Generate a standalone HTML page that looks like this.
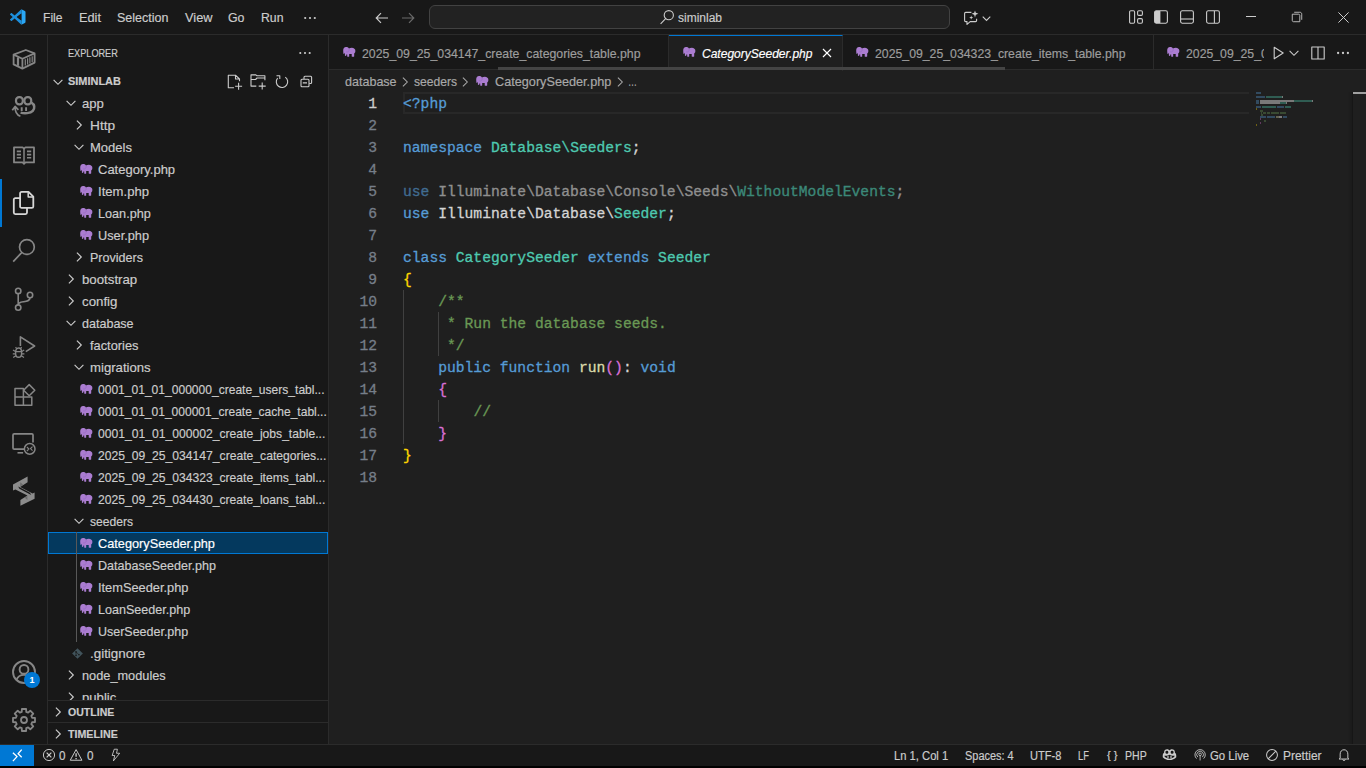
<!DOCTYPE html>
<html>
<head>
<meta charset="utf-8">
<title>CategorySeeder.php - siminlab - Visual Studio Code</title>
<style>
*{box-sizing:border-box;margin:0;padding:0}
html,body{width:1366px;height:768px;overflow:hidden;background:#000}
body{font-family:"Liberation Sans",sans-serif;font-size:13px;color:#ccc;position:relative}
.abs{position:absolute}
.t{white-space:nowrap;-webkit-text-stroke:0.18px currentColor}
svg{display:block;overflow:visible}
#title{left:0;top:0;width:1366px;height:35px;background:#181818;border-bottom:1px solid #2b2b2b}
#cmd{left:429px;top:5px;width:521px;height:24px;border:1px solid #424242;border-radius:6px;background:#222222}
#act{left:0;top:35px;width:48px;height:710px;background:#181818;border-right:1px solid #2b2b2b}
#side{left:48px;top:35px;width:281px;height:710px;background:#181818;border-right:1px solid #2b2b2b;overflow:hidden}
#ed{left:329px;top:35px;width:1037px;height:710px;background:#1f1f1f;overflow:hidden}
#tabs{left:0;top:0;width:1037px;height:35px;background:#181818;border-bottom:1px solid #2b2b2b}
.tab{top:0;height:35px;border-right:1px solid #2b2b2b}
.code{font-family:"Liberation Mono",monospace;font-size:14.67px;line-height:22px;white-space:pre}
.cl span,.cl,.ln{-webkit-text-stroke:0.3px currentColor}
.ln{left:0;width:48px;text-align:right;color:#767e89;height:22px}
.cl{left:74px;height:22px;color:#d4d4d4}
.k{color:#569cd6}.ty{color:#4ec9b0}.c{color:#6a9955}.f{color:#dcdcaa}.b1{color:#ffd700}.b2{color:#da70d6}
#status{left:0;top:744px;width:1366px;height:22px;background:#181818;border-top:1px solid #2b2b2b}
</style>
</head>
<body>
<div id="title" class="abs"><svg class="abs" style="left:10px;top:9px;" width="16" height="16" viewBox="0 0 100 100"><path d="M71 2 L93 12.5 C96 14 97 16 97 19 V81 C97 84 96 86 93 87.5 L71 98 Z" fill="#2aa7f5"/><path d="M71 2 L29 40 L12 26 C10 24.5 8 24.5 6 26 L1 30.5 C-0.5 32 -0.5 34 1 35.5 L17 50 L1 64.5 C-0.5 66 -0.5 68 1 69.5 L6 74 C8 75.5 10 75.5 12 74 L29 60 L71 98 V72 L42.5 50 L71 28 Z" fill="#1d8fdc"/><path d="M71 28 L42.5 50 L71 72 Z" fill="#181818"/></svg><div class="abs t" style="left:43px;top:1px;height:34px;line-height:34px;font-size:13px;color:#cccccc;transform:scaleX(0.9309);transform-origin:0 50%;">File</div><div class="abs t" style="left:78.5px;top:1px;height:34px;line-height:34px;font-size:13px;color:#cccccc;transform:scaleX(0.9821);transform-origin:0 50%;">Edit</div><div class="abs t" style="left:116.5px;top:1px;height:34px;line-height:34px;font-size:13px;color:#cccccc;transform:scaleX(0.9630);transform-origin:0 50%;">Selection</div><div class="abs t" style="left:184.5px;top:1px;height:34px;line-height:34px;font-size:13px;color:#cccccc;transform:scaleX(0.9841);transform-origin:0 50%;">View</div><div class="abs t" style="left:228px;top:1px;height:34px;line-height:34px;font-size:13px;color:#cccccc;transform:scaleX(0.9515);transform-origin:0 50%;">Go</div><div class="abs t" style="left:260.5px;top:1px;height:34px;line-height:34px;font-size:13px;color:#cccccc;transform:scaleX(0.9434);transform-origin:0 50%;">Run</div><svg class="abs" style="left:302px;top:10px;" width="16" height="16" viewBox="0 0 16 16"><circle cx="3.2" cy="8" r="1.1" fill="#cccccc"/><circle cx="8" cy="8" r="1.1" fill="#cccccc"/><circle cx="12.8" cy="8" r="1.1" fill="#cccccc"/></svg><svg class="abs" style="left:374px;top:9.5px;" width="16" height="16" viewBox="0 0 16 16"><path d="M14 8 H2.4 M7 3.2 L2.2 8 L7 12.8" fill="none" stroke="#cccccc" stroke-width="1.15" /></svg><svg class="abs" style="left:400px;top:9.5px;" width="16" height="16" viewBox="0 0 16 16"><path d="M2 8 H13.6 M9 3.2 L13.8 8 L9 12.8" fill="none" stroke="#6b6b6b" stroke-width="1.15" /></svg><div id="cmd" class="abs"></div><svg class="abs" style="left:658.5px;top:9px;" width="16" height="16" viewBox="0 0 16 16"><path d="M14.4 6.2 A4.6 4.6 0 1 1 5.2 6.2 A4.6 4.6 0 1 1 14.4 6.2 Z M6.6 9.6 L1.6 14.8" fill="none" stroke="#cccccc" stroke-width="1.1" /></svg><div class="abs t" style="left:678px;top:1px;height:34px;line-height:34px;font-size:12.5px;color:#cccccc;transform:scaleX(0.9596);transform-origin:0 50%;">siminlab</div><svg class="abs" style="left:963px;top:9.5px;" width="16" height="16" viewBox="0 0 16 16"><path d="M8.4 2.4 H2.6 C2 2.4 1.6 2.8 1.6 3.4 V10.6 C1.6 11.2 2 11.6 2.6 11.6 H4 V14.4 L7.2 11.6 H12.6 C13.2 11.6 13.6 11.2 13.6 10.6 V8.8" fill="none" stroke="#cccccc" stroke-width="1.1" stroke-linejoin="round"/><path d="M12 0.4 L12.8 2.8 L15.4 3.8 L12.8 4.8 L12 7.4 L11.2 4.8 L8.6 3.8 L11.2 2.8 Z" fill="#cccccc"/><path d="M8.2 5.6 L8.7 7 L10.2 7.6 L8.7 8.2 L8.2 9.6 L7.7 8.2 L6.2 7.6 L7.7 7 Z" fill="#cccccc"/></svg><svg class="abs" style="left:981px;top:12.5px;" width="11" height="11" viewBox="0 0 16 16"><path d="M2.5 5.2 L8 10.7 L13.5 5.2" fill="none" stroke="#cccccc" stroke-width="1.6" /></svg><svg class="abs" style="left:1127.5px;top:9px;" width="16" height="16" viewBox="0 0 16 16"><rect x="1.6" y="1.8" width="5" height="12.4" rx="1.2" fill="none" stroke="#cccccc" stroke-width="1.1"/><rect x="9.6" y="1.8" width="4.8" height="4.6" rx="1.2" fill="none" stroke="#cccccc" stroke-width="1.1"/><rect x="9.6" y="9.6" width="4.8" height="4.6" rx="1.2" fill="none" stroke="#cccccc" stroke-width="1.1"/></svg><svg class="abs" style="left:1153px;top:9px;" width="16" height="16" viewBox="0 0 16 16"><path d="M2.6 2 H7.4 V14 H2.6 C2 14 1.8 13.6 1.8 13 V3 C1.8 2.4 2 2 2.6 2 Z" fill="#cccccc"/><rect x="1.6" y="1.8" width="12.8" height="12.4" rx="1.6" fill="none" stroke="#cccccc" stroke-width="1.1"/></svg><svg class="abs" style="left:1179px;top:9px;" width="16" height="16" viewBox="0 0 16 16"><rect x="1.6" y="1.8" width="12.8" height="12.4" rx="1.6" fill="none" stroke="#cccccc" stroke-width="1.1"/><path d="M1.8 10 H14.2" fill="none" stroke="#cccccc" stroke-width="1.1" /></svg><svg class="abs" style="left:1205px;top:9px;" width="16" height="16" viewBox="0 0 16 16"><rect x="1.6" y="1.8" width="12.8" height="12.4" rx="1.6" fill="none" stroke="#cccccc" stroke-width="1.1"/><path d="M9.4 2 V14" fill="none" stroke="#cccccc" stroke-width="1.1" /></svg><div class="abs" style="left:1246px;top:16px;width:10px;height:1px;background:#ccc"></div><svg class="abs" style="left:1290px;top:10px;" width="14" height="14" viewBox="0 0 16 16"><path d="M2.6 4.8 H9.8 C10.6 4.8 11.2 5.4 11.2 6.2 V13.4 H4 C3.2 13.4 2.6 12.8 2.6 12 Z" fill="none" stroke="#cccccc" stroke-width="1" /><path d="M4.8 2.6 H11.2 C12.6 2.6 13.4 3.4 13.4 4.8 V11.2" fill="none" stroke="#cccccc" stroke-width="1" /></svg><svg class="abs" style="left:1337.5px;top:11.5px;" width="11" height="11" viewBox="0 0 11 11"><path d="M0.4 0.4 L10.6 10.6 M10.6 0.4 L0.4 10.6" fill="none" stroke="#cccccc" stroke-width="1" /></svg></div>
<div id="act" class="abs"><div class="abs" style="left:0;top:144px;width:2px;height:48px;background:#0078d4"></div><svg class="abs" style="left:12px;top:12px;" width="24" height="24" viewBox="0 0 24 24"><path d="M1.6 7.6 L13.8 3 L22.6 6.4 L22.6 15.6 L10.4 21.6 L1.6 17.4 Z" fill="none" stroke="#868686" stroke-width="1.8" stroke-linejoin="round"/><path d="M1.6 7.6 L10.4 11.8 L22.6 6.4 M10.4 11.8 L10.4 21.6" fill="none" stroke="#868686" stroke-width="1.8" stroke-linejoin="round"/><path d="M6 10.4 L6 18.8" fill="none" stroke="#868686" stroke-width="2.2" /><path d="M13.3 12.2 L13.3 18.6 M15.6 11.2 L15.6 17.5 M17.9 10.2 L17.9 16.4 M20.2 9.2 L20.2 15.2" fill="none" stroke="#868686" stroke-width="1.2" /></svg><svg class="abs" style="left:12px;top:60px;" width="24" height="24" viewBox="0 0 24 24"><rect x="4" y="2.2" width="6.8" height="7.2" rx="3.1" fill="none" stroke="#868686" stroke-width="2.2"/><rect x="12.4" y="2.2" width="6.8" height="7.2" rx="3.1" fill="none" stroke="#868686" stroke-width="2.2"/><path d="M19.4 7.6 C22.8 9.4 23 13.4 20.8 15.8 C18.4 18.4 12.4 18.8 8.6 17.6" fill="none" stroke="#868686" stroke-width="2.5" /><path d="M9.7 12.3 V15.9 M14.1 12.3 V15.9" fill="none" stroke="#868686" stroke-width="1.9" /><path d="M0.3 15.3 L3.1 11.4 L6.4 14.8 M3.1 11.8 C3 15.4 3.6 19.6 8.4 21.3" fill="none" stroke="#868686" stroke-width="1.7" stroke-linejoin="round"/></svg><svg class="abs" style="left:12px;top:108px;" width="24" height="24" viewBox="0 0 24 24"><path d="M2 4.4 L10.6 4.4 L12 5.6 L13.4 4.4 L22 4.4 L22 19.4 L13.4 19.4 L12 20.8 L10.6 19.4 L2 19.4 Z" fill="none" stroke="#868686" stroke-width="1.8" stroke-linejoin="round"/><path d="M12 5.6 L12 20.4" fill="none" stroke="#868686" stroke-width="1.5" /><path d="M4.8 8.4 H9 M4.8 11.6 H9 M4.8 14.8 H9 M15 8.4 H19.2 M15 11.6 H19.2 M15 14.8 H19.2" fill="none" stroke="#868686" stroke-width="1.6" /></svg><svg class="abs" style="left:12px;top:156px;" width="24" height="24" viewBox="0 0 24 24"><path d="M8.1 2.4 C8.1 1.5 8.7 0.9 9.6 0.9 H16.5 L21.3 5.7 V15.4 C21.3 16.3 20.7 16.9 19.8 16.9 H9.6 C8.7 16.9 8.1 16.3 8.1 15.4 Z" fill="none" stroke="#d7d7d7" stroke-width="1.8" stroke-linejoin="round"/><path d="M16.2 1.2 V6 H21" fill="none" stroke="#d7d7d7" stroke-width="1.5" stroke-linejoin="round"/><path d="M8.1 7.1 H3.3 C2.4 7.1 1.8 7.7 1.8 8.6 V21.6 C1.8 22.5 2.4 23.1 3.3 23.1 H13.5 C14.4 23.1 15 22.5 15 21.6 V16.9" fill="none" stroke="#d7d7d7" stroke-width="1.8" /></svg><svg class="abs" style="left:12px;top:204px;" width="24" height="24" viewBox="0 0 24 24"><path d="M22.3 8 A7.4 7.4 0 1 1 7.5 8 A7.4 7.4 0 1 1 22.3 8 Z M9.9 13.4 L1.2 22.6" fill="none" stroke="#868686" stroke-width="1.7" /></svg><svg class="abs" style="left:12px;top:252px;" width="24" height="24" viewBox="0 0 24 24"><circle cx="6.2" cy="3.9" r="2.7" fill="none" stroke="#868686" stroke-width="1.6"/><circle cx="6.2" cy="20.6" r="2.7" fill="none" stroke="#868686" stroke-width="1.6"/><circle cx="18" cy="8" r="2.7" fill="none" stroke="#868686" stroke-width="1.6"/><path d="M6.2 6.6 L6.2 17.9 M18 10.7 C18 13.9 14.8 14.3 11.4 14.8 C8.4 15.2 6.2 16 6.2 17.9" fill="none" stroke="#868686" stroke-width="1.6" /></svg><svg class="abs" style="left:12px;top:300px;" width="24" height="24" viewBox="0 0 24 24"><path d="M8.4 11 L8.4 1.8 L22.6 11 L13.8 16.6" fill="none" stroke="#868686" stroke-width="1.6" stroke-linejoin="round"/><path d="M3.6 17.2 C3.6 14.8 4.8 13 6.6 13 C8.4 13 9.6 14.8 9.6 17.2 L9.6 18.4 C9.6 20.8 8.4 22.2 6.6 22.2 C4.8 22.2 3.6 20.8 3.6 18.4 Z" fill="none" stroke="#868686" stroke-width="1.4" /><path d="M3.6 16.6 H9.6 M1 15 L3.4 16.4 M12.2 15 L9.8 16.4 M0.8 18.8 H3.6 M9.6 18.8 H12.4 M1.2 22.6 L3.8 20.8 M12 22.6 L9.4 20.8 M4.6 13.6 L3.6 12.2 M8.6 13.6 L9.6 12.2" fill="none" stroke="#868686" stroke-width="1.2" /></svg><svg class="abs" style="left:12px;top:348px;" width="24" height="24" viewBox="0 0 24 24"><path d="M3 5.6 H11.4 V14 H3 Z M3 14 H11.4 V22.2 H3 Z M11.4 14 H19.8 V22.2 H11.4 Z" fill="none" stroke="#868686" stroke-width="1.5" stroke-linejoin="round"/><path d="M17.2 1.6 L22.8 7.2 L17.2 12.8 L11.6 7.2 Z" fill="none" stroke="#868686" stroke-width="1.5" stroke-linejoin="round"/></svg><svg class="abs" style="left:12px;top:396px;" width="24" height="24" viewBox="0 0 24 24"><path d="M12.6 18.2 H2.2 C1.4 18.2 1 17.8 1 17 V4.1 C1 3.3 1.4 2.9 2.2 2.9 H19.8 C20.6 2.9 21 3.3 21 4.1 V11.4" fill="none" stroke="#868686" stroke-width="1.7" /><path d="M5.5 21.8 H11.1" fill="none" stroke="#868686" stroke-width="1.6" /><circle cx="17.7" cy="17.9" r="5.3" fill="#181818" stroke="#868686" stroke-width="1.5"/><path d="M14.9 16 L16.9 18 L14.9 20 M20.5 15.6 L18.5 17.6 L20.5 19.6" fill="none" stroke="#868686" stroke-width="1.1" /></svg><svg class="abs" style="left:11.5px;top:441px;" width="23.6" height="30.4" viewBox="0 0 23.6 30.4"><path d="M15.6 0.4 L15.6 6.2 L8.2 11 L20.6 17.6 L22.6 16.4 L22.6 22.8 L8.4 29.8 L8.4 24 L15.4 19.6 L3.4 13.4 L1 14.6 L1 8.6 Z" fill="#8c8c8c"/><path d="M6.2 10.4 L18 16.8 L19.2 19 L7.4 12.8 Z" fill="#181818"/><path d="M8.2 6.2 L11 8.6 L8.2 11 Z M15.4 19.6 L12.8 21.8 L15.4 24 Z" fill="#6c6c6c"/></svg><svg class="abs" style="left:12px;top:625px;" width="24" height="24" viewBox="0 0 24 24"><circle cx="12" cy="12" r="11" fill="none" stroke="#868686" stroke-width="1.9"/><circle cx="12" cy="9.4" r="4.4" fill="none" stroke="#868686" stroke-width="1.9"/><path d="M4.4 20 C5.8 16.4 8.6 14.9 12 14.9 C15.4 14.9 18.2 16.4 19.6 20" fill="none" stroke="#868686" stroke-width="1.9" /></svg><div class="abs" style="left:24px;top:637px;width:16px;height:16px;border-radius:8px;background:#0078d4;color:#fff;font-size:9px;font-weight:bold;line-height:16px;text-align:center">1</div><svg class="abs" style="left:12px;top:673px;" width="24" height="24" viewBox="0 0 24 24"><path d="M9.76 3.90 L9.88 1.00 L14.12 1.00 L14.24 3.90 L16.14 4.69 L18.28 2.73 L21.27 5.72 L19.31 7.86 L20.10 9.76 L23.00 9.88 L23.00 14.12 L20.10 14.24 L19.31 16.14 L21.27 18.28 L18.28 21.27 L16.14 19.31 L14.24 20.10 L14.12 23.00 L9.88 23.00 L9.76 20.10 L7.86 19.31 L5.72 21.27 L2.73 18.28 L4.69 16.14 L3.90 14.24 L1.00 14.12 L1.00 9.88 L3.90 9.76 L4.69 7.86 L2.73 5.72 L5.72 2.73 L7.86 4.69 Z" fill="none" stroke="#868686" stroke-width="1.8" stroke-linejoin="round"/><circle cx="12" cy="12" r="3" fill="none" stroke="#868686" stroke-width="1.8"/></svg></div>
<div id="side" class="abs"><div class="abs t" style="left:20.2px;top:1px;height:35px;line-height:35px;font-size:11px;color:#cccccc;transform:scaleX(0.8312);transform-origin:0 50%;">EXPLORER</div><svg class="abs" style="left:249px;top:10px;" width="16" height="16" viewBox="0 0 16 16"><circle cx="3.3" cy="8" r="1.05" fill="#cccccc"/><circle cx="8" cy="8" r="1.05" fill="#cccccc"/><circle cx="12.7" cy="8" r="1.05" fill="#cccccc"/></svg><svg class="abs" style="left:1.7px;top:38.5px;" width="16" height="16" viewBox="0 0 16 16"><path d="M3.6 5.9 L8 10.3 L12.4 5.9" fill="none" stroke="#cccccc" stroke-width="1.15" /></svg><div class="abs t" style="left:20.2px;top:35px;height:22px;line-height:22px;font-size:11px;color:#cccccc;transform:scaleX(0.9950);transform-origin:0 50%;font-weight:bold;">SIMINLAB</div><svg class="abs" style="left:179px;top:38.5px;" width="16" height="16" viewBox="0 0 16 16"><path d="M7 13.8 H1.3 V1.2 H8.5 L12.5 5 V7.3 M8.5 1.2 V5 H12.5" fill="none" stroke="#cccccc" stroke-width="1.1" stroke-linejoin="round"/><path d="M11.6 8.8 V15.7 M8.1 12.2 H15.1" fill="none" stroke="#cccccc" stroke-width="1.1" /></svg><svg class="abs" style="left:202.3px;top:38.5px;" width="16" height="16" viewBox="0 0 16 16"><path d="M6.3 12.1 H1 V0.9 H5.8 L7 1.8 H14.9 V6.2 M1 5.5 H5.6 L7 4 H14.9" fill="none" stroke="#cccccc" stroke-width="1.1" stroke-linejoin="round"/><path d="M12.2 8.6 V15.6 M8.7 12.1 H15.7" fill="none" stroke="#cccccc" stroke-width="1.1" /></svg><svg class="abs" style="left:226px;top:38.5px;" width="16" height="16" viewBox="0 0 16 16"><path d="M11.27 3.13 A5.7 5.7 0 1 1 3.63 4.14" fill="none" stroke="#cccccc" stroke-width="1.1" /><path d="M2.5 1.8 H5.8 V5.1" fill="none" stroke="#cccccc" stroke-width="1.1" stroke-linejoin="round"/></svg><svg class="abs" style="left:249.7px;top:38.5px;" width="16" height="16" viewBox="0 0 16 16"><path d="M6 5 V3.3 C6 2.7 6.4 2.3 7 2.3 H12.6 C13.2 2.3 13.6 2.7 13.6 3.3 V8.5 C13.6 9.1 13.2 9.5 12.6 9.5 H11.2" fill="none" stroke="#cccccc" stroke-width="1.1" /><path d="M4 5.2 H10 C10.6 5.2 11 5.6 11 6.2 V11.8 C11 12.4 10.6 12.8 10 12.8 H4 C3.4 12.8 3 12.4 3 11.8 V6.2 C3 5.6 3.4 5.2 4 5.2 Z M4.8 8.9 H9" fill="none" stroke="#cccccc" stroke-width="1.1" /></svg><div class="abs" style="left:0;top:57px;width:280px;height:608px;overflow:hidden"><svg class="abs" style="left:15px;top:3px;" width="16" height="16" viewBox="0 0 16 16"><path d="M3.6 5.9 L8 10.3 L12.4 5.9" fill="none" stroke="#cccccc" stroke-width="1.15" /></svg><div class="abs t" style="left:34.3px;top:1px;height:22px;line-height:22px;font-size:13px;color:#cccccc;transform:scaleX(1.0096);transform-origin:0 50%;">app</div><svg class="abs" style="left:23px;top:25px;" width="16" height="16" viewBox="0 0 16 16"><path d="M5.9 3.6 L10.3 8 L5.9 12.4" fill="none" stroke="#cccccc" stroke-width="1.15" /></svg><div class="abs t" style="left:42.3px;top:23px;height:22px;line-height:22px;font-size:13px;color:#cccccc;transform:scaleX(1.0528);transform-origin:0 50%;">Http</div><svg class="abs" style="left:23px;top:47px;" width="16" height="16" viewBox="0 0 16 16"><path d="M3.6 5.9 L8 10.3 L12.4 5.9" fill="none" stroke="#cccccc" stroke-width="1.15" /></svg><div class="abs t" style="left:42.3px;top:45px;height:22px;line-height:22px;font-size:13px;color:#cccccc;transform:scaleX(1.0022);transform-origin:0 50%;">Models</div><svg class="abs" style="left:31.5px;top:72px;" width="13" height="10" viewBox="0 0 13 10"><path d="M3.0 0.1 C1.2 0.1 0.2 1.6 0.2 3.6 C0.2 5 0.3 6 0.5 6.7 C0.7 7.2 1.4 7.1 1.4 6.6 L1.5 5.7 L1.9 6.4 L1.9 8.6 C1.9 9.2 3.3 9.2 3.3 8.6 L3.3 7.4 C3.6 7.5 3.9 7.5 4.2 7.4 L4.2 9.2 C4.2 9.7 4.6 9.8 5.0 9.8 L5.5 9.8 C6.0 9.8 6.2 9.6 6.2 9.2 L6.2 7 L8.7 7 L8.7 9.2 C8.7 9.7 9.0 9.8 9.5 9.8 L10.4 9.8 C10.9 9.8 11.2 9.6 11.2 9.2 L11.2 6.6 C12 5.8 12.4 4.9 12.4 3.9 C12.4 2.1 10.9 0.8 8.8 0.8 C7.6 0.8 6.7 1 6 1.4 C5.3 0.6 4.2 0.1 3.0 0.1 Z" fill="#ab7dd1"/><path d="M5.9 1.5 C6.3 2.6 6.2 3.8 5.4 4.6 C4.6 5.2 3.6 5.1 3 4.6" fill="none" stroke="#9468c2" stroke-width="0.6"/></svg><div class="abs t" style="left:50.2px;top:67px;height:22px;line-height:22px;font-size:13px;color:#cccccc;transform:scaleX(1.0002);transform-origin:0 50%;">Category.php</div><svg class="abs" style="left:31.5px;top:94px;" width="13" height="10" viewBox="0 0 13 10"><path d="M3.0 0.1 C1.2 0.1 0.2 1.6 0.2 3.6 C0.2 5 0.3 6 0.5 6.7 C0.7 7.2 1.4 7.1 1.4 6.6 L1.5 5.7 L1.9 6.4 L1.9 8.6 C1.9 9.2 3.3 9.2 3.3 8.6 L3.3 7.4 C3.6 7.5 3.9 7.5 4.2 7.4 L4.2 9.2 C4.2 9.7 4.6 9.8 5.0 9.8 L5.5 9.8 C6.0 9.8 6.2 9.6 6.2 9.2 L6.2 7 L8.7 7 L8.7 9.2 C8.7 9.7 9.0 9.8 9.5 9.8 L10.4 9.8 C10.9 9.8 11.2 9.6 11.2 9.2 L11.2 6.6 C12 5.8 12.4 4.9 12.4 3.9 C12.4 2.1 10.9 0.8 8.8 0.8 C7.6 0.8 6.7 1 6 1.4 C5.3 0.6 4.2 0.1 3.0 0.1 Z" fill="#ab7dd1"/><path d="M5.9 1.5 C6.3 2.6 6.2 3.8 5.4 4.6 C4.6 5.2 3.6 5.1 3 4.6" fill="none" stroke="#9468c2" stroke-width="0.6"/></svg><div class="abs t" style="left:50.2px;top:89px;height:22px;line-height:22px;font-size:13px;color:#cccccc;transform:scaleX(1.0082);transform-origin:0 50%;">Item.php</div><svg class="abs" style="left:31.5px;top:116px;" width="13" height="10" viewBox="0 0 13 10"><path d="M3.0 0.1 C1.2 0.1 0.2 1.6 0.2 3.6 C0.2 5 0.3 6 0.5 6.7 C0.7 7.2 1.4 7.1 1.4 6.6 L1.5 5.7 L1.9 6.4 L1.9 8.6 C1.9 9.2 3.3 9.2 3.3 8.6 L3.3 7.4 C3.6 7.5 3.9 7.5 4.2 7.4 L4.2 9.2 C4.2 9.7 4.6 9.8 5.0 9.8 L5.5 9.8 C6.0 9.8 6.2 9.6 6.2 9.2 L6.2 7 L8.7 7 L8.7 9.2 C8.7 9.7 9.0 9.8 9.5 9.8 L10.4 9.8 C10.9 9.8 11.2 9.6 11.2 9.2 L11.2 6.6 C12 5.8 12.4 4.9 12.4 3.9 C12.4 2.1 10.9 0.8 8.8 0.8 C7.6 0.8 6.7 1 6 1.4 C5.3 0.6 4.2 0.1 3.0 0.1 Z" fill="#ab7dd1"/><path d="M5.9 1.5 C6.3 2.6 6.2 3.8 5.4 4.6 C4.6 5.2 3.6 5.1 3 4.6" fill="none" stroke="#9468c2" stroke-width="0.6"/></svg><div class="abs t" style="left:50.2px;top:111px;height:22px;line-height:22px;font-size:13px;color:#cccccc;transform:scaleX(0.9738);transform-origin:0 50%;">Loan.php</div><svg class="abs" style="left:31.5px;top:138px;" width="13" height="10" viewBox="0 0 13 10"><path d="M3.0 0.1 C1.2 0.1 0.2 1.6 0.2 3.6 C0.2 5 0.3 6 0.5 6.7 C0.7 7.2 1.4 7.1 1.4 6.6 L1.5 5.7 L1.9 6.4 L1.9 8.6 C1.9 9.2 3.3 9.2 3.3 8.6 L3.3 7.4 C3.6 7.5 3.9 7.5 4.2 7.4 L4.2 9.2 C4.2 9.7 4.6 9.8 5.0 9.8 L5.5 9.8 C6.0 9.8 6.2 9.6 6.2 9.2 L6.2 7 L8.7 7 L8.7 9.2 C8.7 9.7 9.0 9.8 9.5 9.8 L10.4 9.8 C10.9 9.8 11.2 9.6 11.2 9.2 L11.2 6.6 C12 5.8 12.4 4.9 12.4 3.9 C12.4 2.1 10.9 0.8 8.8 0.8 C7.6 0.8 6.7 1 6 1.4 C5.3 0.6 4.2 0.1 3.0 0.1 Z" fill="#ab7dd1"/><path d="M5.9 1.5 C6.3 2.6 6.2 3.8 5.4 4.6 C4.6 5.2 3.6 5.1 3 4.6" fill="none" stroke="#9468c2" stroke-width="0.6"/></svg><div class="abs t" style="left:50.2px;top:133px;height:22px;line-height:22px;font-size:13px;color:#cccccc;transform:scaleX(0.9801);transform-origin:0 50%;">User.php</div><svg class="abs" style="left:23px;top:157px;" width="16" height="16" viewBox="0 0 16 16"><path d="M5.9 3.6 L10.3 8 L5.9 12.4" fill="none" stroke="#cccccc" stroke-width="1.15" /></svg><div class="abs t" style="left:42.3px;top:155px;height:22px;line-height:22px;font-size:13px;color:#cccccc;transform:scaleX(0.9634);transform-origin:0 50%;">Providers</div><svg class="abs" style="left:15px;top:179px;" width="16" height="16" viewBox="0 0 16 16"><path d="M5.9 3.6 L10.3 8 L5.9 12.4" fill="none" stroke="#cccccc" stroke-width="1.15" /></svg><div class="abs t" style="left:34.3px;top:177px;height:22px;line-height:22px;font-size:13px;color:#cccccc;transform:scaleX(1.0184);transform-origin:0 50%;">bootstrap</div><svg class="abs" style="left:15px;top:201px;" width="16" height="16" viewBox="0 0 16 16"><path d="M5.9 3.6 L10.3 8 L5.9 12.4" fill="none" stroke="#cccccc" stroke-width="1.15" /></svg><div class="abs t" style="left:34.3px;top:199px;height:22px;line-height:22px;font-size:13px;color:#cccccc;transform:scaleX(1.0204);transform-origin:0 50%;">config</div><svg class="abs" style="left:15px;top:223px;" width="16" height="16" viewBox="0 0 16 16"><path d="M3.6 5.9 L8 10.3 L12.4 5.9" fill="none" stroke="#cccccc" stroke-width="1.15" /></svg><div class="abs t" style="left:34.3px;top:221px;height:22px;line-height:22px;font-size:13px;color:#cccccc;transform:scaleX(0.9646);transform-origin:0 50%;">database</div><svg class="abs" style="left:23px;top:245px;" width="16" height="16" viewBox="0 0 16 16"><path d="M5.9 3.6 L10.3 8 L5.9 12.4" fill="none" stroke="#cccccc" stroke-width="1.15" /></svg><div class="abs t" style="left:42.3px;top:243px;height:22px;line-height:22px;font-size:13px;color:#cccccc;transform:scaleX(0.9871);transform-origin:0 50%;">factories</div><svg class="abs" style="left:23px;top:267px;" width="16" height="16" viewBox="0 0 16 16"><path d="M3.6 5.9 L8 10.3 L12.4 5.9" fill="none" stroke="#cccccc" stroke-width="1.15" /></svg><div class="abs t" style="left:42.3px;top:265px;height:22px;line-height:22px;font-size:13px;color:#cccccc;transform:scaleX(1.0122);transform-origin:0 50%;">migrations</div><svg class="abs" style="left:31.5px;top:292px;" width="13" height="10" viewBox="0 0 13 10"><path d="M3.0 0.1 C1.2 0.1 0.2 1.6 0.2 3.6 C0.2 5 0.3 6 0.5 6.7 C0.7 7.2 1.4 7.1 1.4 6.6 L1.5 5.7 L1.9 6.4 L1.9 8.6 C1.9 9.2 3.3 9.2 3.3 8.6 L3.3 7.4 C3.6 7.5 3.9 7.5 4.2 7.4 L4.2 9.2 C4.2 9.7 4.6 9.8 5.0 9.8 L5.5 9.8 C6.0 9.8 6.2 9.6 6.2 9.2 L6.2 7 L8.7 7 L8.7 9.2 C8.7 9.7 9.0 9.8 9.5 9.8 L10.4 9.8 C10.9 9.8 11.2 9.6 11.2 9.2 L11.2 6.6 C12 5.8 12.4 4.9 12.4 3.9 C12.4 2.1 10.9 0.8 8.8 0.8 C7.6 0.8 6.7 1 6 1.4 C5.3 0.6 4.2 0.1 3.0 0.1 Z" fill="#ab7dd1"/><path d="M5.9 1.5 C6.3 2.6 6.2 3.8 5.4 4.6 C4.6 5.2 3.6 5.1 3 4.6" fill="none" stroke="#9468c2" stroke-width="0.6"/></svg><div class="abs t" style="left:50.2px;top:287px;height:22px;line-height:22px;font-size:13px;color:#cccccc;transform:scaleX(0.9271);transform-origin:0 50%;">0001_01_01_000000_create_users_tabl...</div><svg class="abs" style="left:31.5px;top:314px;" width="13" height="10" viewBox="0 0 13 10"><path d="M3.0 0.1 C1.2 0.1 0.2 1.6 0.2 3.6 C0.2 5 0.3 6 0.5 6.7 C0.7 7.2 1.4 7.1 1.4 6.6 L1.5 5.7 L1.9 6.4 L1.9 8.6 C1.9 9.2 3.3 9.2 3.3 8.6 L3.3 7.4 C3.6 7.5 3.9 7.5 4.2 7.4 L4.2 9.2 C4.2 9.7 4.6 9.8 5.0 9.8 L5.5 9.8 C6.0 9.8 6.2 9.6 6.2 9.2 L6.2 7 L8.7 7 L8.7 9.2 C8.7 9.7 9.0 9.8 9.5 9.8 L10.4 9.8 C10.9 9.8 11.2 9.6 11.2 9.2 L11.2 6.6 C12 5.8 12.4 4.9 12.4 3.9 C12.4 2.1 10.9 0.8 8.8 0.8 C7.6 0.8 6.7 1 6 1.4 C5.3 0.6 4.2 0.1 3.0 0.1 Z" fill="#ab7dd1"/><path d="M5.9 1.5 C6.3 2.6 6.2 3.8 5.4 4.6 C4.6 5.2 3.6 5.1 3 4.6" fill="none" stroke="#9468c2" stroke-width="0.6"/></svg><div class="abs t" style="left:50.2px;top:309px;height:22px;line-height:22px;font-size:13px;color:#cccccc;transform:scaleX(0.9255);transform-origin:0 50%;">0001_01_01_000001_create_cache_tabl...</div><svg class="abs" style="left:31.5px;top:336px;" width="13" height="10" viewBox="0 0 13 10"><path d="M3.0 0.1 C1.2 0.1 0.2 1.6 0.2 3.6 C0.2 5 0.3 6 0.5 6.7 C0.7 7.2 1.4 7.1 1.4 6.6 L1.5 5.7 L1.9 6.4 L1.9 8.6 C1.9 9.2 3.3 9.2 3.3 8.6 L3.3 7.4 C3.6 7.5 3.9 7.5 4.2 7.4 L4.2 9.2 C4.2 9.7 4.6 9.8 5.0 9.8 L5.5 9.8 C6.0 9.8 6.2 9.6 6.2 9.2 L6.2 7 L8.7 7 L8.7 9.2 C8.7 9.7 9.0 9.8 9.5 9.8 L10.4 9.8 C10.9 9.8 11.2 9.6 11.2 9.2 L11.2 6.6 C12 5.8 12.4 4.9 12.4 3.9 C12.4 2.1 10.9 0.8 8.8 0.8 C7.6 0.8 6.7 1 6 1.4 C5.3 0.6 4.2 0.1 3.0 0.1 Z" fill="#ab7dd1"/><path d="M5.9 1.5 C6.3 2.6 6.2 3.8 5.4 4.6 C4.6 5.2 3.6 5.1 3 4.6" fill="none" stroke="#9468c2" stroke-width="0.6"/></svg><div class="abs t" style="left:50.2px;top:331px;height:22px;line-height:22px;font-size:13px;color:#cccccc;transform:scaleX(0.9330);transform-origin:0 50%;">0001_01_01_000002_create_jobs_table...</div><svg class="abs" style="left:31.5px;top:358px;" width="13" height="10" viewBox="0 0 13 10"><path d="M3.0 0.1 C1.2 0.1 0.2 1.6 0.2 3.6 C0.2 5 0.3 6 0.5 6.7 C0.7 7.2 1.4 7.1 1.4 6.6 L1.5 5.7 L1.9 6.4 L1.9 8.6 C1.9 9.2 3.3 9.2 3.3 8.6 L3.3 7.4 C3.6 7.5 3.9 7.5 4.2 7.4 L4.2 9.2 C4.2 9.7 4.6 9.8 5.0 9.8 L5.5 9.8 C6.0 9.8 6.2 9.6 6.2 9.2 L6.2 7 L8.7 7 L8.7 9.2 C8.7 9.7 9.0 9.8 9.5 9.8 L10.4 9.8 C10.9 9.8 11.2 9.6 11.2 9.2 L11.2 6.6 C12 5.8 12.4 4.9 12.4 3.9 C12.4 2.1 10.9 0.8 8.8 0.8 C7.6 0.8 6.7 1 6 1.4 C5.3 0.6 4.2 0.1 3.0 0.1 Z" fill="#ab7dd1"/><path d="M5.9 1.5 C6.3 2.6 6.2 3.8 5.4 4.6 C4.6 5.2 3.6 5.1 3 4.6" fill="none" stroke="#9468c2" stroke-width="0.6"/></svg><div class="abs t" style="left:50.2px;top:353px;height:22px;line-height:22px;font-size:13px;color:#cccccc;transform:scaleX(0.9344);transform-origin:0 50%;">2025_09_25_034147_create_categories...</div><svg class="abs" style="left:31.5px;top:380px;" width="13" height="10" viewBox="0 0 13 10"><path d="M3.0 0.1 C1.2 0.1 0.2 1.6 0.2 3.6 C0.2 5 0.3 6 0.5 6.7 C0.7 7.2 1.4 7.1 1.4 6.6 L1.5 5.7 L1.9 6.4 L1.9 8.6 C1.9 9.2 3.3 9.2 3.3 8.6 L3.3 7.4 C3.6 7.5 3.9 7.5 4.2 7.4 L4.2 9.2 C4.2 9.7 4.6 9.8 5.0 9.8 L5.5 9.8 C6.0 9.8 6.2 9.6 6.2 9.2 L6.2 7 L8.7 7 L8.7 9.2 C8.7 9.7 9.0 9.8 9.5 9.8 L10.4 9.8 C10.9 9.8 11.2 9.6 11.2 9.2 L11.2 6.6 C12 5.8 12.4 4.9 12.4 3.9 C12.4 2.1 10.9 0.8 8.8 0.8 C7.6 0.8 6.7 1 6 1.4 C5.3 0.6 4.2 0.1 3.0 0.1 Z" fill="#ab7dd1"/><path d="M5.9 1.5 C6.3 2.6 6.2 3.8 5.4 4.6 C4.6 5.2 3.6 5.1 3 4.6" fill="none" stroke="#9468c2" stroke-width="0.6"/></svg><div class="abs t" style="left:50.2px;top:375px;height:22px;line-height:22px;font-size:13px;color:#cccccc;transform:scaleX(0.9331);transform-origin:0 50%;">2025_09_25_034323_create_items_tabl...</div><svg class="abs" style="left:31.5px;top:402px;" width="13" height="10" viewBox="0 0 13 10"><path d="M3.0 0.1 C1.2 0.1 0.2 1.6 0.2 3.6 C0.2 5 0.3 6 0.5 6.7 C0.7 7.2 1.4 7.1 1.4 6.6 L1.5 5.7 L1.9 6.4 L1.9 8.6 C1.9 9.2 3.3 9.2 3.3 8.6 L3.3 7.4 C3.6 7.5 3.9 7.5 4.2 7.4 L4.2 9.2 C4.2 9.7 4.6 9.8 5.0 9.8 L5.5 9.8 C6.0 9.8 6.2 9.6 6.2 9.2 L6.2 7 L8.7 7 L8.7 9.2 C8.7 9.7 9.0 9.8 9.5 9.8 L10.4 9.8 C10.9 9.8 11.2 9.6 11.2 9.2 L11.2 6.6 C12 5.8 12.4 4.9 12.4 3.9 C12.4 2.1 10.9 0.8 8.8 0.8 C7.6 0.8 6.7 1 6 1.4 C5.3 0.6 4.2 0.1 3.0 0.1 Z" fill="#ab7dd1"/><path d="M5.9 1.5 C6.3 2.6 6.2 3.8 5.4 4.6 C4.6 5.2 3.6 5.1 3 4.6" fill="none" stroke="#9468c2" stroke-width="0.6"/></svg><div class="abs t" style="left:50.2px;top:397px;height:22px;line-height:22px;font-size:13px;color:#cccccc;transform:scaleX(0.9330);transform-origin:0 50%;">2025_09_25_034430_create_loans_tabl...</div><svg class="abs" style="left:23px;top:421px;" width="16" height="16" viewBox="0 0 16 16"><path d="M3.6 5.9 L8 10.3 L12.4 5.9" fill="none" stroke="#cccccc" stroke-width="1.15" /></svg><div class="abs t" style="left:42.3px;top:419px;height:22px;line-height:22px;font-size:13px;color:#cccccc;transform:scaleX(0.9297);transform-origin:0 50%;">seeders</div><div class="abs" style="left:0;top:440px;width:280px;height:22px;background:#04395e;border:1px solid #0078d4"></div><svg class="abs" style="left:31.5px;top:446px;" width="13" height="10" viewBox="0 0 13 10"><path d="M3.0 0.1 C1.2 0.1 0.2 1.6 0.2 3.6 C0.2 5 0.3 6 0.5 6.7 C0.7 7.2 1.4 7.1 1.4 6.6 L1.5 5.7 L1.9 6.4 L1.9 8.6 C1.9 9.2 3.3 9.2 3.3 8.6 L3.3 7.4 C3.6 7.5 3.9 7.5 4.2 7.4 L4.2 9.2 C4.2 9.7 4.6 9.8 5.0 9.8 L5.5 9.8 C6.0 9.8 6.2 9.6 6.2 9.2 L6.2 7 L8.7 7 L8.7 9.2 C8.7 9.7 9.0 9.8 9.5 9.8 L10.4 9.8 C10.9 9.8 11.2 9.6 11.2 9.2 L11.2 6.6 C12 5.8 12.4 4.9 12.4 3.9 C12.4 2.1 10.9 0.8 8.8 0.8 C7.6 0.8 6.7 1 6 1.4 C5.3 0.6 4.2 0.1 3.0 0.1 Z" fill="#ab7dd1"/><path d="M5.9 1.5 C6.3 2.6 6.2 3.8 5.4 4.6 C4.6 5.2 3.6 5.1 3 4.6" fill="none" stroke="#9468c2" stroke-width="0.6"/></svg><div class="abs t" style="left:50.2px;top:441px;height:22px;line-height:22px;font-size:13px;color:#ffffff;transform:scaleX(0.9802);transform-origin:0 50%;">CategorySeeder.php</div><svg class="abs" style="left:31.5px;top:468px;" width="13" height="10" viewBox="0 0 13 10"><path d="M3.0 0.1 C1.2 0.1 0.2 1.6 0.2 3.6 C0.2 5 0.3 6 0.5 6.7 C0.7 7.2 1.4 7.1 1.4 6.6 L1.5 5.7 L1.9 6.4 L1.9 8.6 C1.9 9.2 3.3 9.2 3.3 8.6 L3.3 7.4 C3.6 7.5 3.9 7.5 4.2 7.4 L4.2 9.2 C4.2 9.7 4.6 9.8 5.0 9.8 L5.5 9.8 C6.0 9.8 6.2 9.6 6.2 9.2 L6.2 7 L8.7 7 L8.7 9.2 C8.7 9.7 9.0 9.8 9.5 9.8 L10.4 9.8 C10.9 9.8 11.2 9.6 11.2 9.2 L11.2 6.6 C12 5.8 12.4 4.9 12.4 3.9 C12.4 2.1 10.9 0.8 8.8 0.8 C7.6 0.8 6.7 1 6 1.4 C5.3 0.6 4.2 0.1 3.0 0.1 Z" fill="#ab7dd1"/><path d="M5.9 1.5 C6.3 2.6 6.2 3.8 5.4 4.6 C4.6 5.2 3.6 5.1 3 4.6" fill="none" stroke="#9468c2" stroke-width="0.6"/></svg><div class="abs t" style="left:50.2px;top:463px;height:22px;line-height:22px;font-size:13px;color:#cccccc;transform:scaleX(0.9651);transform-origin:0 50%;">DatabaseSeeder.php</div><svg class="abs" style="left:31.5px;top:490px;" width="13" height="10" viewBox="0 0 13 10"><path d="M3.0 0.1 C1.2 0.1 0.2 1.6 0.2 3.6 C0.2 5 0.3 6 0.5 6.7 C0.7 7.2 1.4 7.1 1.4 6.6 L1.5 5.7 L1.9 6.4 L1.9 8.6 C1.9 9.2 3.3 9.2 3.3 8.6 L3.3 7.4 C3.6 7.5 3.9 7.5 4.2 7.4 L4.2 9.2 C4.2 9.7 4.6 9.8 5.0 9.8 L5.5 9.8 C6.0 9.8 6.2 9.6 6.2 9.2 L6.2 7 L8.7 7 L8.7 9.2 C8.7 9.7 9.0 9.8 9.5 9.8 L10.4 9.8 C10.9 9.8 11.2 9.6 11.2 9.2 L11.2 6.6 C12 5.8 12.4 4.9 12.4 3.9 C12.4 2.1 10.9 0.8 8.8 0.8 C7.6 0.8 6.7 1 6 1.4 C5.3 0.6 4.2 0.1 3.0 0.1 Z" fill="#ab7dd1"/><path d="M5.9 1.5 C6.3 2.6 6.2 3.8 5.4 4.6 C4.6 5.2 3.6 5.1 3 4.6" fill="none" stroke="#9468c2" stroke-width="0.6"/></svg><div class="abs t" style="left:50.2px;top:485px;height:22px;line-height:22px;font-size:13px;color:#cccccc;transform:scaleX(0.9859);transform-origin:0 50%;">ItemSeeder.php</div><svg class="abs" style="left:31.5px;top:512px;" width="13" height="10" viewBox="0 0 13 10"><path d="M3.0 0.1 C1.2 0.1 0.2 1.6 0.2 3.6 C0.2 5 0.3 6 0.5 6.7 C0.7 7.2 1.4 7.1 1.4 6.6 L1.5 5.7 L1.9 6.4 L1.9 8.6 C1.9 9.2 3.3 9.2 3.3 8.6 L3.3 7.4 C3.6 7.5 3.9 7.5 4.2 7.4 L4.2 9.2 C4.2 9.7 4.6 9.8 5.0 9.8 L5.5 9.8 C6.0 9.8 6.2 9.6 6.2 9.2 L6.2 7 L8.7 7 L8.7 9.2 C8.7 9.7 9.0 9.8 9.5 9.8 L10.4 9.8 C10.9 9.8 11.2 9.6 11.2 9.2 L11.2 6.6 C12 5.8 12.4 4.9 12.4 3.9 C12.4 2.1 10.9 0.8 8.8 0.8 C7.6 0.8 6.7 1 6 1.4 C5.3 0.6 4.2 0.1 3.0 0.1 Z" fill="#ab7dd1"/><path d="M5.9 1.5 C6.3 2.6 6.2 3.8 5.4 4.6 C4.6 5.2 3.6 5.1 3 4.6" fill="none" stroke="#9468c2" stroke-width="0.6"/></svg><div class="abs t" style="left:50.2px;top:507px;height:22px;line-height:22px;font-size:13px;color:#cccccc;transform:scaleX(0.9662);transform-origin:0 50%;">LoanSeeder.php</div><svg class="abs" style="left:31.5px;top:534px;" width="13" height="10" viewBox="0 0 13 10"><path d="M3.0 0.1 C1.2 0.1 0.2 1.6 0.2 3.6 C0.2 5 0.3 6 0.5 6.7 C0.7 7.2 1.4 7.1 1.4 6.6 L1.5 5.7 L1.9 6.4 L1.9 8.6 C1.9 9.2 3.3 9.2 3.3 8.6 L3.3 7.4 C3.6 7.5 3.9 7.5 4.2 7.4 L4.2 9.2 C4.2 9.7 4.6 9.8 5.0 9.8 L5.5 9.8 C6.0 9.8 6.2 9.6 6.2 9.2 L6.2 7 L8.7 7 L8.7 9.2 C8.7 9.7 9.0 9.8 9.5 9.8 L10.4 9.8 C10.9 9.8 11.2 9.6 11.2 9.2 L11.2 6.6 C12 5.8 12.4 4.9 12.4 3.9 C12.4 2.1 10.9 0.8 8.8 0.8 C7.6 0.8 6.7 1 6 1.4 C5.3 0.6 4.2 0.1 3.0 0.1 Z" fill="#ab7dd1"/><path d="M5.9 1.5 C6.3 2.6 6.2 3.8 5.4 4.6 C4.6 5.2 3.6 5.1 3 4.6" fill="none" stroke="#9468c2" stroke-width="0.6"/></svg><div class="abs t" style="left:50.2px;top:529px;height:22px;line-height:22px;font-size:13px;color:#cccccc;transform:scaleX(0.9600);transform-origin:0 50%;">UserSeeder.php</div><svg class="abs" style="left:22.9px;top:554.5px;" width="13" height="13" viewBox="0 0 16 16"><path d="M8 1.4 L14.6 8 L8 14.6 L1.4 8 Z" fill="#41535b"/><circle cx="6.2" cy="6" r="1" fill="#181818"/><circle cx="9.8" cy="9.6" r="1" fill="#181818"/><circle cx="6.2" cy="10.4" r="1" fill="#181818"/><path d="M6.2 6 V10.4 M6.2 6 L9.8 9.6" fill="none" stroke="#181818" stroke-width="0.8" /></svg><div class="abs t" style="left:42px;top:551px;height:22px;line-height:22px;font-size:13px;color:#cccccc;transform:scaleX(1.0303);transform-origin:0 50%;">.gitignore</div><svg class="abs" style="left:15px;top:575px;" width="16" height="16" viewBox="0 0 16 16"><path d="M5.9 3.6 L10.3 8 L5.9 12.4" fill="none" stroke="#cccccc" stroke-width="1.15" /></svg><div class="abs t" style="left:34.3px;top:573px;height:22px;line-height:22px;font-size:13px;color:#cccccc;transform:scaleX(0.9814);transform-origin:0 50%;">node_modules</div><svg class="abs" style="left:15px;top:597px;" width="16" height="16" viewBox="0 0 16 16"><path d="M5.9 3.6 L10.3 8 L5.9 12.4" fill="none" stroke="#cccccc" stroke-width="1.15" /></svg><div class="abs t" style="left:34.3px;top:595px;height:22px;line-height:22px;font-size:13px;color:#cccccc;transform:scaleX(1.0098);transform-origin:0 50%;">public</div><div class="abs" style="left:28px;top:440px;width:1px;height:110px;background:#585858"></div></div><div class="abs" style="left:0;top:665px;width:280px;height:23px;border-top:1px solid #2b2b2b;background:#181818"></div><svg class="abs" style="left:2px;top:669px;" width="16" height="16" viewBox="0 0 16 16"><path d="M5.9 3.6 L10.3 8 L5.9 12.4" fill="none" stroke="#cccccc" stroke-width="1.15" /></svg><div class="abs t" style="left:20.2px;top:666px;height:22px;line-height:22px;font-size:11px;color:#cccccc;transform:scaleX(0.9591);transform-origin:0 50%;font-weight:bold;">OUTLINE</div><div class="abs" style="left:0;top:687px;width:280px;height:23px;border-top:1px solid #2b2b2b;background:#181818"></div><svg class="abs" style="left:2px;top:691px;" width="16" height="16" viewBox="0 0 16 16"><path d="M5.9 3.6 L10.3 8 L5.9 12.4" fill="none" stroke="#cccccc" stroke-width="1.15" /></svg><div class="abs t" style="left:20.2px;top:688px;height:22px;line-height:22px;font-size:11px;color:#cccccc;transform:scaleX(0.9701);transform-origin:0 50%;font-weight:bold;">TIMELINE</div></div>
<div id="ed" class="abs"><div id="tabs" class="abs"><div class="abs tab" style="left:0;width:340px"></div><svg class="abs" style="left:13.5px;top:12px;" width="13" height="10" viewBox="0 0 13 10"><path d="M3.0 0.1 C1.2 0.1 0.2 1.6 0.2 3.6 C0.2 5 0.3 6 0.5 6.7 C0.7 7.2 1.4 7.1 1.4 6.6 L1.5 5.7 L1.9 6.4 L1.9 8.6 C1.9 9.2 3.3 9.2 3.3 8.6 L3.3 7.4 C3.6 7.5 3.9 7.5 4.2 7.4 L4.2 9.2 C4.2 9.7 4.6 9.8 5.0 9.8 L5.5 9.8 C6.0 9.8 6.2 9.6 6.2 9.2 L6.2 7 L8.7 7 L8.7 9.2 C8.7 9.7 9.0 9.8 9.5 9.8 L10.4 9.8 C10.9 9.8 11.2 9.6 11.2 9.2 L11.2 6.6 C12 5.8 12.4 4.9 12.4 3.9 C12.4 2.1 10.9 0.8 8.8 0.8 C7.6 0.8 6.7 1 6 1.4 C5.3 0.6 4.2 0.1 3.0 0.1 Z" fill="#ab7dd1"/><path d="M5.9 1.5 C6.3 2.6 6.2 3.8 5.4 4.6 C4.6 5.2 3.6 5.1 3 4.6" fill="none" stroke="#9468c2" stroke-width="0.6"/></svg><div class="abs t" style="left:32.5px;top:1px;height:35px;line-height:35px;font-size:13px;color:#9d9d9d;transform:scaleX(0.9466);transform-origin:0 50%;">2025_09_25_034147_create_categories_table.php</div><div class="abs tab" style="left:340px;width:174px;height:36px;background:#1f1f1f;border-top:1px solid #0078d4"></div><svg class="abs" style="left:353.5px;top:12px;" width="13" height="10" viewBox="0 0 13 10"><path d="M3.0 0.1 C1.2 0.1 0.2 1.6 0.2 3.6 C0.2 5 0.3 6 0.5 6.7 C0.7 7.2 1.4 7.1 1.4 6.6 L1.5 5.7 L1.9 6.4 L1.9 8.6 C1.9 9.2 3.3 9.2 3.3 8.6 L3.3 7.4 C3.6 7.5 3.9 7.5 4.2 7.4 L4.2 9.2 C4.2 9.7 4.6 9.8 5.0 9.8 L5.5 9.8 C6.0 9.8 6.2 9.6 6.2 9.2 L6.2 7 L8.7 7 L8.7 9.2 C8.7 9.7 9.0 9.8 9.5 9.8 L10.4 9.8 C10.9 9.8 11.2 9.6 11.2 9.2 L11.2 6.6 C12 5.8 12.4 4.9 12.4 3.9 C12.4 2.1 10.9 0.8 8.8 0.8 C7.6 0.8 6.7 1 6 1.4 C5.3 0.6 4.2 0.1 3.0 0.1 Z" fill="#ab7dd1"/><path d="M5.9 1.5 C6.3 2.6 6.2 3.8 5.4 4.6 C4.6 5.2 3.6 5.1 3 4.6" fill="none" stroke="#9468c2" stroke-width="0.6"/></svg><div class="abs t" style="left:372.5px;top:1px;height:35px;line-height:35px;font-size:13px;color:#ffffff;transform:scaleX(0.9247);transform-origin:0 50%;font-style:italic;">CategorySeeder.php</div><svg class="abs" style="left:491px;top:11px;" width="14" height="14" viewBox="0 0 16 16"><path d="M3.4 3.4 L12.6 12.6 M12.6 3.4 L3.4 12.6" fill="none" stroke="#ffffff" stroke-width="1.3" /></svg><div class="abs tab" style="left:514px;width:311px"></div><svg class="abs" style="left:526.5px;top:12px;" width="13" height="10" viewBox="0 0 13 10"><path d="M3.0 0.1 C1.2 0.1 0.2 1.6 0.2 3.6 C0.2 5 0.3 6 0.5 6.7 C0.7 7.2 1.4 7.1 1.4 6.6 L1.5 5.7 L1.9 6.4 L1.9 8.6 C1.9 9.2 3.3 9.2 3.3 8.6 L3.3 7.4 C3.6 7.5 3.9 7.5 4.2 7.4 L4.2 9.2 C4.2 9.7 4.6 9.8 5.0 9.8 L5.5 9.8 C6.0 9.8 6.2 9.6 6.2 9.2 L6.2 7 L8.7 7 L8.7 9.2 C8.7 9.7 9.0 9.8 9.5 9.8 L10.4 9.8 C10.9 9.8 11.2 9.6 11.2 9.2 L11.2 6.6 C12 5.8 12.4 4.9 12.4 3.9 C12.4 2.1 10.9 0.8 8.8 0.8 C7.6 0.8 6.7 1 6 1.4 C5.3 0.6 4.2 0.1 3.0 0.1 Z" fill="#ab7dd1"/><path d="M5.9 1.5 C6.3 2.6 6.2 3.8 5.4 4.6 C4.6 5.2 3.6 5.1 3 4.6" fill="none" stroke="#9468c2" stroke-width="0.6"/></svg><div class="abs t" style="left:545.5px;top:1px;height:35px;line-height:35px;font-size:13px;color:#9d9d9d;transform:scaleX(0.9443);transform-origin:0 50%;">2025_09_25_034323_create_items_table.php</div><svg class="abs" style="left:838px;top:12px;" width="13" height="10" viewBox="0 0 13 10"><path d="M3.0 0.1 C1.2 0.1 0.2 1.6 0.2 3.6 C0.2 5 0.3 6 0.5 6.7 C0.7 7.2 1.4 7.1 1.4 6.6 L1.5 5.7 L1.9 6.4 L1.9 8.6 C1.9 9.2 3.3 9.2 3.3 8.6 L3.3 7.4 C3.6 7.5 3.9 7.5 4.2 7.4 L4.2 9.2 C4.2 9.7 4.6 9.8 5.0 9.8 L5.5 9.8 C6.0 9.8 6.2 9.6 6.2 9.2 L6.2 7 L8.7 7 L8.7 9.2 C8.7 9.7 9.0 9.8 9.5 9.8 L10.4 9.8 C10.9 9.8 11.2 9.6 11.2 9.2 L11.2 6.6 C12 5.8 12.4 4.9 12.4 3.9 C12.4 2.1 10.9 0.8 8.8 0.8 C7.6 0.8 6.7 1 6 1.4 C5.3 0.6 4.2 0.1 3.0 0.1 Z" fill="#ab7dd1"/><path d="M5.9 1.5 C6.3 2.6 6.2 3.8 5.4 4.6 C4.6 5.2 3.6 5.1 3 4.6" fill="none" stroke="#9468c2" stroke-width="0.6"/></svg><div class="abs" style="left:857px;top:0;width:77.5px;height:34px;overflow:hidden"><div class="abs t" style="left:0px;top:1px;height:35px;line-height:35px;font-size:13px;color:#9d9d9d;transform:scaleX(0.9423);transform-origin:0 50%;">2025_09_25_034430_create_loans_table.php</div></div><div class="abs" style="left:935px;top:0;width:102px;height:34px;background:#181818"></div><svg class="abs" style="left:941px;top:10px;" width="16" height="16" viewBox="0 0 16 16"><path d="M4.2 2.2 L13.2 8 L4.2 13.8 Z" fill="none" stroke="#cccccc" stroke-width="1.1" stroke-linejoin="round"/></svg><svg class="abs" style="left:957px;top:10px;" width="16" height="16" viewBox="0 0 16 16"><path d="M3.6 5.9 L8 10.3 L12.4 5.9" fill="none" stroke="#cccccc" stroke-width="1.0925" /></svg><svg class="abs" style="left:980.5px;top:10px;" width="16" height="16" viewBox="0 0 16 16"><path d="M1.8 2 H14.2 V14 H1.8 Z M8 2 V14" fill="none" stroke="#cccccc" stroke-width="1.1" stroke-linejoin="round"/></svg><svg class="abs" style="left:1005.5px;top:10px;" width="16" height="16" viewBox="0 0 16 16"><circle cx="3.1" cy="8" r="1.15" fill="#cccccc"/><circle cx="8" cy="8" r="1.15" fill="#cccccc"/><circle cx="12.9" cy="8" r="1.15" fill="#cccccc"/></svg><div class="abs" style="left:169px;top:32px;width:507px;height:3px;background:#444444"></div></div><div class="abs t" style="left:16.4px;top:36px;height:22px;line-height:22px;font-size:13px;color:#a9a9a9;transform:scaleX(0.9646);transform-origin:0 50%;">database</div><svg class="abs" style="left:68px;top:38.5px;" width="16" height="16" viewBox="0 0 16 16"><path d="M5.9 3.6 L10.3 8 L5.9 12.4" fill="none" stroke="#a9a9a9" stroke-width="1.035" /></svg><div class="abs t" style="left:84.5px;top:36px;height:22px;line-height:22px;font-size:13px;color:#a9a9a9;transform:scaleX(0.9297);transform-origin:0 50%;">seeders</div><svg class="abs" style="left:128px;top:38.5px;" width="16" height="16" viewBox="0 0 16 16"><path d="M5.9 3.6 L10.3 8 L5.9 12.4" fill="none" stroke="#a9a9a9" stroke-width="1.035" /></svg><svg class="abs" style="left:147px;top:41px;" width="13" height="10" viewBox="0 0 13 10"><path d="M3.0 0.1 C1.2 0.1 0.2 1.6 0.2 3.6 C0.2 5 0.3 6 0.5 6.7 C0.7 7.2 1.4 7.1 1.4 6.6 L1.5 5.7 L1.9 6.4 L1.9 8.6 C1.9 9.2 3.3 9.2 3.3 8.6 L3.3 7.4 C3.6 7.5 3.9 7.5 4.2 7.4 L4.2 9.2 C4.2 9.7 4.6 9.8 5.0 9.8 L5.5 9.8 C6.0 9.8 6.2 9.6 6.2 9.2 L6.2 7 L8.7 7 L8.7 9.2 C8.7 9.7 9.0 9.8 9.5 9.8 L10.4 9.8 C10.9 9.8 11.2 9.6 11.2 9.2 L11.2 6.6 C12 5.8 12.4 4.9 12.4 3.9 C12.4 2.1 10.9 0.8 8.8 0.8 C7.6 0.8 6.7 1 6 1.4 C5.3 0.6 4.2 0.1 3.0 0.1 Z" fill="#ab7dd1"/><path d="M5.9 1.5 C6.3 2.6 6.2 3.8 5.4 4.6 C4.6 5.2 3.6 5.1 3 4.6" fill="none" stroke="#9468c2" stroke-width="0.6"/></svg><div class="abs t" style="left:165.7px;top:36px;height:22px;line-height:22px;font-size:13px;color:#a9a9a9;transform:scaleX(0.9752);transform-origin:0 50%;">CategorySeeder.php</div><svg class="abs" style="left:283px;top:38.5px;" width="16" height="16" viewBox="0 0 16 16"><path d="M5.9 3.6 L10.3 8 L5.9 12.4" fill="none" stroke="#a9a9a9" stroke-width="1.035" /></svg><div class="abs t" style="left:298.6px;top:36px;height:22px;line-height:22px;font-size:13px;color:#a9a9a9;transform:scaleX(0.6923);transform-origin:0 50%;">…</div><div class="abs code" style="left:0;top:57px;width:1037px;height:652px"><div class="abs" style="left:74px;top:0;width:846px;height:22px;border:2px solid #282828;border-right:none"></div><div class="abs ln" style="top:1px;color:#cccccc">1</div><div class="abs cl" style="top:1px"><span class="k">&lt;?php</span></div><div class="abs ln" style="top:23px;color:#767e89">2</div><div class="abs ln" style="top:45px;color:#767e89">3</div><div class="abs cl" style="top:45px"><span class="k">namespace</span> <span class="ty">Database\Seeders</span>;</div><div class="abs ln" style="top:67px;color:#767e89">4</div><div class="abs ln" style="top:89px;color:#767e89">5</div><div class="abs cl" style="top:89px"><span style="opacity:.62"><span class="k">use</span> Illuminate\Database\Console\Seeds\<span class="ty">WithoutModelEvents</span>;</span></div><div class="abs ln" style="top:111px;color:#767e89">6</div><div class="abs cl" style="top:111px"><span class="k">use</span> Illuminate\Database\<span class="ty">Seeder</span>;</div><div class="abs ln" style="top:133px;color:#767e89">7</div><div class="abs ln" style="top:155px;color:#767e89">8</div><div class="abs cl" style="top:155px"><span class="k">class</span> <span class="ty">CategorySeeder</span> <span class="k">extends</span> <span class="ty">Seeder</span></div><div class="abs ln" style="top:177px;color:#767e89">9</div><div class="abs cl" style="top:177px"><span class="b1">{</span></div><div class="abs ln" style="top:199px;color:#767e89">10</div><div class="abs cl" style="top:199px">    <span class="c">/**</span></div><div class="abs ln" style="top:221px;color:#767e89">11</div><div class="abs cl" style="top:221px">    <span class="c"> * Run the database seeds.</span></div><div class="abs ln" style="top:243px;color:#767e89">12</div><div class="abs cl" style="top:243px">    <span class="c"> */</span></div><div class="abs ln" style="top:265px;color:#767e89">13</div><div class="abs cl" style="top:265px">    <span class="k">public</span> <span class="k">function</span> <span class="f">run</span><span class="b2">()</span>: <span class="k">void</span></div><div class="abs ln" style="top:287px;color:#767e89">14</div><div class="abs cl" style="top:287px">    <span class="b2">{</span></div><div class="abs ln" style="top:309px;color:#767e89">15</div><div class="abs cl" style="top:309px">        <span class="c">//</span></div><div class="abs ln" style="top:331px;color:#767e89">16</div><div class="abs cl" style="top:331px">    <span class="b2">}</span></div><div class="abs ln" style="top:353px;color:#767e89">17</div><div class="abs cl" style="top:353px"><span class="b1">}</span></div><div class="abs ln" style="top:375px;color:#767e89">18</div><div class="abs" style="left:74px;top:198px;width:1px;height:154px;background:#404040"></div><div class="abs" style="left:109px;top:220px;width:1px;height:44px;background:#404040"></div><div class="abs" style="left:109px;top:308px;width:1px;height:22px;background:#404040"></div></div><div class="abs" style="left:927px;top:57px;width:5px;height:2px;background:#569cd6;opacity:.36"></div><div class="abs" style="left:927px;top:61px;width:9px;height:2px;background:#569cd6;opacity:.36"></div><div class="abs" style="left:937px;top:61px;width:16px;height:2px;background:#4ec9b0;opacity:.36"></div><div class="abs" style="left:953px;top:61px;width:1px;height:2px;background:#d4d4d4;opacity:.5"></div><div class="abs" style="left:927px;top:65px;width:3px;height:2px;background:#569cd6;opacity:.36"></div><div class="abs" style="left:931px;top:65px;width:34px;height:2px;background:#d4d4d4;opacity:.5"></div><div class="abs" style="left:965px;top:65px;width:18px;height:2px;background:#4ec9b0;opacity:.36"></div><div class="abs" style="left:983px;top:65px;width:1px;height:2px;background:#d4d4d4;opacity:.5"></div><div class="abs" style="left:927px;top:67px;width:3px;height:2px;background:#569cd6;opacity:.36"></div><div class="abs" style="left:931px;top:67px;width:20px;height:2px;background:#d4d4d4;opacity:.5"></div><div class="abs" style="left:951px;top:67px;width:6px;height:2px;background:#4ec9b0;opacity:.36"></div><div class="abs" style="left:957px;top:67px;width:1px;height:2px;background:#d4d4d4;opacity:.5"></div><div class="abs" style="left:927px;top:71px;width:5px;height:2px;background:#569cd6;opacity:.36"></div><div class="abs" style="left:933px;top:71px;width:14px;height:2px;background:#4ec9b0;opacity:.36"></div><div class="abs" style="left:948px;top:71px;width:7px;height:2px;background:#569cd6;opacity:.36"></div><div class="abs" style="left:956px;top:71px;width:6px;height:2px;background:#4ec9b0;opacity:.36"></div><div class="abs" style="left:927px;top:73px;width:1px;height:2px;background:#ffd700;opacity:.36"></div><div class="abs" style="left:931px;top:75px;width:3px;height:2px;background:#6a9955;opacity:.36"></div><div class="abs" style="left:932px;top:77px;width:1px;height:2px;background:#6a9955;opacity:.36"></div><div class="abs" style="left:934px;top:77px;width:3px;height:2px;background:#6a9955;opacity:.36"></div><div class="abs" style="left:938px;top:77px;width:3px;height:2px;background:#6a9955;opacity:.36"></div><div class="abs" style="left:942px;top:77px;width:8px;height:2px;background:#6a9955;opacity:.36"></div><div class="abs" style="left:951px;top:77px;width:6px;height:2px;background:#6a9955;opacity:.36"></div><div class="abs" style="left:932px;top:79px;width:2px;height:2px;background:#6a9955;opacity:.36"></div><div class="abs" style="left:931px;top:81px;width:6px;height:2px;background:#569cd6;opacity:.36"></div><div class="abs" style="left:938px;top:81px;width:8px;height:2px;background:#569cd6;opacity:.36"></div><div class="abs" style="left:947px;top:81px;width:3px;height:2px;background:#dcdcaa;opacity:.36"></div><div class="abs" style="left:950px;top:81px;width:3px;height:2px;background:#d4d4d4;opacity:.5"></div><div class="abs" style="left:954px;top:81px;width:4px;height:2px;background:#569cd6;opacity:.36"></div><div class="abs" style="left:931px;top:83px;width:1px;height:2px;background:#da70d6;opacity:.36"></div><div class="abs" style="left:935px;top:85px;width:2px;height:2px;background:#6a9955;opacity:.36"></div><div class="abs" style="left:931px;top:87px;width:1px;height:2px;background:#da70d6;opacity:.36"></div><div class="abs" style="left:927px;top:89px;width:1px;height:2px;background:#ffd700;opacity:.36"></div><div class="abs" style="left:1018px;top:57px;width:6px;height:652px;background:linear-gradient(to right,rgba(0,0,0,0),rgba(0,0,0,.18))"></div><div class="abs" style="left:1023px;top:57px;width:1px;height:652px;background:#161616"></div><div class="abs" style="left:1024px;top:57px;width:13px;height:2px;background:#a0a0a0"></div></div>
<div id="status" class="abs"><div class="abs" style="left:0;top:0;width:34px;height:21px;background:#0078d4"></div><svg class="abs" style="left:9px;top:2.5px;" width="16" height="16" viewBox="0 0 16 16"><path d="M3.9 4.8 L8 8.6 L3.9 13.1 M12.7 1.6 L9.1 5.7 L12.7 9.3" fill="none" stroke="#ffffff" stroke-width="1.3" /></svg><svg class="abs" style="left:42.05px;top:2.9px;" width="14" height="14" viewBox="0 0 16 16"><circle cx="8" cy="8" r="6.4" fill="none" stroke="#cccccc" stroke-width="1.1"/><path d="M5.3 5.3 L10.7 10.7 M10.7 5.3 L5.3 10.7" fill="none" stroke="#cccccc" stroke-width="1.4" /></svg><div class="abs t" style="left:59.3px;top:1px;height:21px;line-height:21px;font-size:12px;color:#cccccc;transform:scaleX(0.9739);transform-origin:0 50%;">0</div><svg class="abs" style="left:69.1px;top:2.6px;" width="14.2" height="14.2" viewBox="0 0 16 16"><path d="M8 1.8 L14.6 13.8 H1.4 Z" fill="none" stroke="#cccccc" stroke-width="1.1" stroke-linejoin="round"/><path d="M8 5.8 V10 M8 11.2 V12.8" fill="none" stroke="#cccccc" stroke-width="1.5" /></svg><div class="abs t" style="left:86.7px;top:1px;height:21px;line-height:21px;font-size:12px;color:#cccccc;transform:scaleX(0.9739);transform-origin:0 50%;">0</div><svg class="abs" style="left:109px;top:2.7px;" width="14" height="14" viewBox="0 0 16 16"><path d="M9.6 1.4 H6 L3.6 8.6 H6.6 L5 14.8 L12.2 6 H8.6 Z" fill="none" stroke="#cccccc" stroke-width="1" stroke-linejoin="round"/></svg><div class="abs t" style="left:894.2px;top:1px;height:21px;line-height:21px;font-size:12px;color:#cccccc;transform:scaleX(0.9339);transform-origin:0 50%;">Ln 1, Col 1</div><div class="abs t" style="left:964.8px;top:1px;height:21px;line-height:21px;font-size:12px;color:#cccccc;transform:scaleX(0.9125);transform-origin:0 50%;">Spaces: 4</div><div class="abs t" style="left:1029.6px;top:1px;height:21px;line-height:21px;font-size:12px;color:#cccccc;transform:scaleX(0.9236);transform-origin:0 50%;">UTF-8</div><div class="abs t" style="left:1077.6px;top:1px;height:21px;line-height:21px;font-size:12px;color:#cccccc;transform:scaleX(0.7783);transform-origin:0 50%;">LF</div><div class="abs t" style="left:1125px;top:1px;height:21px;line-height:21px;font-size:12px;color:#cccccc;transform:scaleX(0.8794);transform-origin:0 50%;">PHP</div><div class="abs t" style="left:1210px;top:1px;height:21px;line-height:21px;font-size:12px;color:#cccccc;transform:scaleX(0.9479);transform-origin:0 50%;">Go Live</div><div class="abs t" style="left:1282.5px;top:1px;height:21px;line-height:21px;font-size:12px;color:#cccccc;transform:scaleX(0.9954);transform-origin:0 50%;">Prettier</div><div class="abs t" style="left:1106.8px;top:0px;height:21px;line-height:21px;font-size:11px;color:#cccccc;transform:scaleX(1.0189);transform-origin:0 50%;">{ }</div><svg class="abs" style="left:1162.3px;top:2px;" width="15" height="15" viewBox="0 0 16 16"><path d="M2.2 6 C2.2 3.4 3.6 2.4 5.4 2.4 C6.8 2.4 7.6 3 8 3.8 C8.4 3 9.2 2.4 10.6 2.4 C12.4 2.4 13.8 3.4 13.8 6 C14.8 6.8 15.2 7.8 15.2 9 V10.8 C13.6 12.8 10.8 13.8 8 13.8 C5.2 13.8 2.4 12.8 0.8 10.8 V9 C0.8 7.8 1.2 6.8 2.2 6 Z" fill="#cccccc"/><rect x="3.7" y="3.9" width="3" height="3.2" rx="1.3" fill="#181818"/><rect x="9.3" y="3.9" width="3" height="3.2" rx="1.3" fill="#181818"/><path d="M2.8 9 C4.4 9.5 6.4 9.3 8 8.3 C9.6 9.3 11.6 9.5 13.2 9 V10.5 C11.8 11.8 9.8 12.4 8 12.4 C6.2 12.4 4.2 11.8 2.8 10.5 Z" fill="#181818"/><path d="M6.4 9.9 V11.4 M9.6 9.9 V11.4" fill="none" stroke="#cccccc" stroke-width="1.3" stroke-linecap="round"/></svg><svg class="abs" style="left:1193.7px;top:3.8px;" width="12.2" height="12.2" viewBox="0 0 16 16"><circle cx="8" cy="7" r="1.7" fill="none" stroke="#cccccc" stroke-width="1.1"/><path d="M5 10.6 A4.4 4.4 0 1 1 11 10.6 M3.4 12.6 A6.8 6.8 0 1 1 12.6 12.6 M8 8.8 V15" fill="none" stroke="#cccccc" stroke-width="1.1" /></svg><svg class="abs" style="left:1265.1px;top:2.9px;" width="14" height="14" viewBox="0 0 16 16"><circle cx="8" cy="8" r="6.2" fill="none" stroke="#cccccc" stroke-width="1.15"/><path d="M3.6 12.4 L12.4 3.6" fill="none" stroke="#cccccc" stroke-width="1.15" /></svg><svg class="abs" style="left:1337.4px;top:3px;" width="14" height="14" viewBox="0 0 16 16"><path d="M3.6 11.6 V7 C3.6 4 5.4 2 8 2 C10.6 2 12.4 4 12.4 7 V11.6 L13.6 12.6 H2.4 Z M6.6 13 C6.6 14.8 9.4 14.8 9.4 13" fill="none" stroke="#cccccc" stroke-width="1.1" stroke-linejoin="round"/></svg></div>
</body>
</html>
